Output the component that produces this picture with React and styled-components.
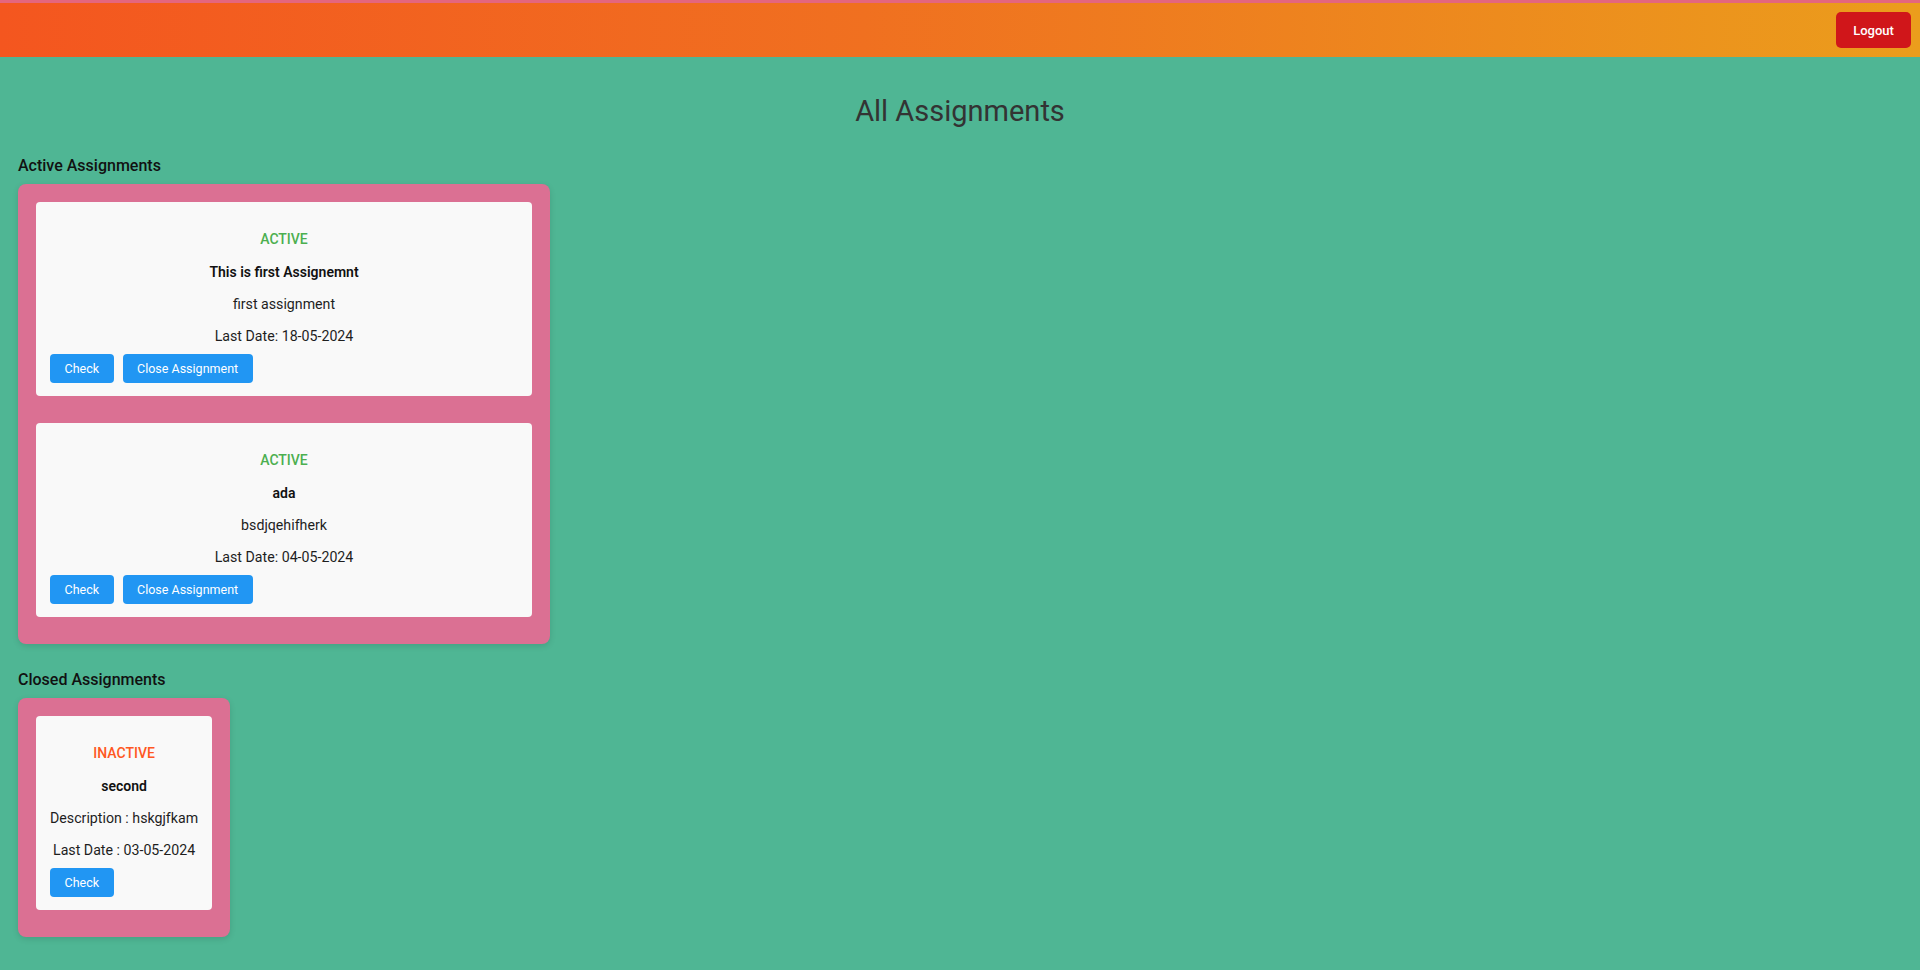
import React from 'react';
import styled, { createGlobalStyle } from 'styled-components';

const GlobalStyle = createGlobalStyle`
  body {
    margin: 0;
    background-color: #4fb694;
    font-family: Roboto, "Liberation Sans", Arial, sans-serif;
  }
`;

const Header = styled.header`
  height: 54px;
  border-top: 3px solid #e4667e;
  background: linear-gradient(90deg, #f4561f 0%, #f07020 45%, #eb9d1c 100%);
  display: flex;
  align-items: center;
  justify-content: flex-end;
  padding-right: 9px;
`;

const LogoutButton = styled.button`
  width: 75px;
  height: 36px;
  border: none;
  border-radius: 5px;
  background-color: #d0161a;
  color: #ffffff;
  font-family: inherit;
  font-size: 13px;
  font-weight: 500;
  cursor: pointer;
`;

const Main = styled.main`
  padding: 0 18px 20px;
`;

const PageTitle = styled.h2`
  margin: 37px 0 28px;
  text-align: center;
  font-size: 29px;
  line-height: 34px;
  font-weight: 400;
  color: #333333;
`;

const Section = styled.section`
  margin-bottom: 26px;
`;

const SectionTitle = styled.h4`
  margin: 0 0 9px;
  font-size: 16px;
  line-height: 19px;
  font-weight: 500;
  color: #111111;
`;

const Group = styled.div`
  display: flex;
  flex-direction: column;
  width: fit-content;
  padding: 18px 18px 0;
  background-color: #db7093;
  border-radius: 8px;
  box-shadow: 0 2px 6px rgba(0, 0, 0, 0.12);
`;

const Card = styled.div`
  box-sizing: border-box;
  width: ${(p) => (p.$wide ? '496px' : 'auto')};
  padding: 14px 14px 13px;
  margin-bottom: 27px;
  background-color: #f9f9f9;
  border-radius: 4px;
  text-align: center;
`;

const Status = styled.p`
  margin: 14px 0 15px;
  font-size: 14px;
  line-height: 18px;
  font-weight: 500;
  color: ${(p) => (p.$active ? '#4caf50' : '#ff5722')};
`;

const CardTitle = styled.p`
  margin: 0 0 14px;
  font-size: 14px;
  line-height: 18px;
  font-weight: 600;
  color: #111111;
`;

const CardText = styled.p`
  margin: 0 0 14px;
  font-size: 14.2px;
  line-height: 18px;
  color: #1e1e1e;

  &:last-of-type {
    margin-bottom: 9px;
  }
`;

const Actions = styled.div`
  display: flex;
  gap: 9px;
`;

const ActionButton = styled.button`
  height: 29px;
  padding: 0 14.5px;
  border: none;
  border-radius: 4px;
  background-color: #2196f3;
  color: #ffffff;
  font-family: inherit;
  font-size: 12.5px;
  cursor: pointer;
`;

const activeAssignments = [
  { id: 1, title: 'This is first Assignemnt', description: 'first assignment', lastDate: '18-05-2024' },
  { id: 2, title: 'ada', description: 'bsdjqehifherk', lastDate: '04-05-2024' },
];

const closedAssignments = [
  { id: 3, title: 'second', description: 'hskgjfkam', lastDate: '03-05-2024' },
];

function App() {
  return (
    <>
      <GlobalStyle />
      <Header>
        <LogoutButton>Logout</LogoutButton>
      </Header>
      <Main>
        <PageTitle>All Assignments</PageTitle>

        <Section>
          <SectionTitle>Active Assignments</SectionTitle>
          <Group>
            {activeAssignments.map((a) => (
              <Card key={a.id} $wide>
                <Status $active>ACTIVE</Status>
                <CardTitle>{a.title}</CardTitle>
                <CardText>{a.description}</CardText>
                <CardText>Last Date: {a.lastDate}</CardText>
                <Actions>
                  <ActionButton>Check</ActionButton>
                  <ActionButton>Close Assignment</ActionButton>
                </Actions>
              </Card>
            ))}
          </Group>
        </Section>

        <Section>
          <SectionTitle>Closed Assignments</SectionTitle>
          <Group>
            {closedAssignments.map((a) => (
              <Card key={a.id}>
                <Status>INACTIVE</Status>
                <CardTitle>{a.title}</CardTitle>
                <CardText>Description : {a.description}</CardText>
                <CardText>Last Date : {a.lastDate}</CardText>
                <Actions>
                  <ActionButton>Check</ActionButton>
                </Actions>
              </Card>
            ))}
          </Group>
        </Section>
      </Main>
    </>
  );
}

export default App;
